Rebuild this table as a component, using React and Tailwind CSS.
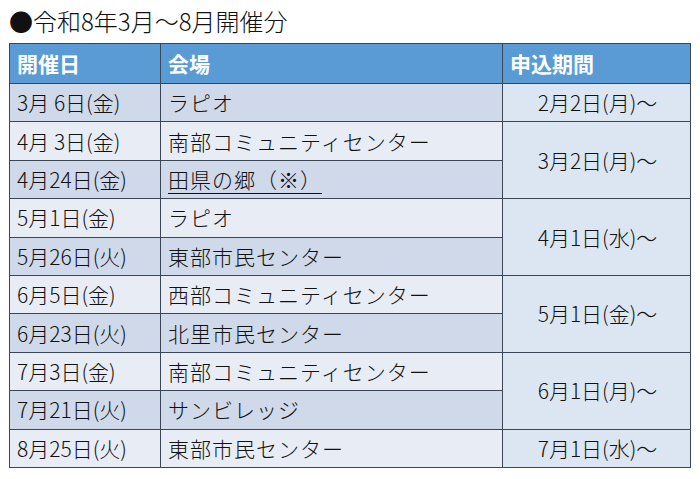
import React from 'react';

const ROWS = [
  { date: '3月 6日(金)', place: 'ラピオ', apply: '2月2日(月)～', span: 1 },
  { date: '4月 3日(金)', place: '南部コミュニティセンター', apply: '3月2日(月)～', span: 2 },
  { date: '4月24日(金)', place: '田県の郷（※）', underline: true },
  { date: '5月1日(金)', place: 'ラピオ', apply: '4月1日(水)～', span: 2 },
  { date: '5月26日(火)', place: '東部市民センター' },
  { date: '6月5日(金)', place: '西部コミュニティセンター', apply: '5月1日(金)～', span: 2 },
  { date: '6月23日(火)', place: '北里市民センター' },
  { date: '7月3日(金)', place: '南部コミュニティセンター', apply: '6月1日(月)～', span: 2 },
  { date: '7月21日(火)', place: 'サンビレッジ' },
  { date: '8月25日(火)', place: '東部市民センター', apply: '7月1日(水)～', span: 1 },
];

const App = () => {
  return (
    <div className="w-[700px] h-[479px] bg-white text-[#111] font-['Noto_Sans_CJK_JP','Noto_Sans',sans-serif] overflow-hidden">
      <div className="h-[43px] pl-[9px] text-[24px] leading-[42px] font-light">●令和8年3月～8月開催分</div>
      <table className="ml-[9px] w-[681px] border-collapse border border-[#3b4656] table-fixed">
        <colgroup>
          <col className="w-[151px]" />
          <col className="w-[342px]" />
          <col className="w-[188px]" />
        </colgroup>
        <thead>
          <tr className="h-[40px] bg-[#5b9bd5] text-white text-[21px] font-bold">
            <th className="border border-[#3b4656] text-left pl-[7px] font-bold">開催日</th>
            <th className="border border-[#3b4656] text-left pl-[7px] font-bold">会場</th>
            <th className="border border-[#3b4656] text-left pl-[7px] font-bold">申込期間</th>
          </tr>
        </thead>
        <tbody className="text-[21px] font-light">
          {ROWS.map((r, idx) => (
            <tr key={idx} className={`h-[38.4px] ${idx % 2 === 0 ? 'bg-[#cfd9ea]' : 'bg-[#e8ecf5]'}`}>
              <td className="border border-[#3b4656] pl-[7px] leading-none whitespace-nowrap">{r.date}</td>
              <td className="border border-[#3b4656] pl-[7px] leading-none whitespace-nowrap tracking-[1px]">
                {r.underline ? (
                  <span className="underline underline-offset-[5px] decoration-1 pr-[6px]">{r.place}</span>
                ) : r.place}
              </td>
              {r.apply && (
                <td rowSpan={r.span} className="border border-[#3b4656] bg-[#dce6f2] text-center leading-none whitespace-nowrap pl-[2px]">
                  {r.apply}
                </td>
              )}
            </tr>
          ))}
        </tbody>
      </table>
    </div>
  );
};

export default App;
